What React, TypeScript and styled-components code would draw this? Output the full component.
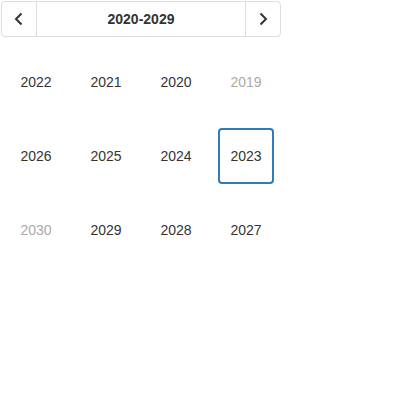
import React from 'react';
import styled, { createGlobalStyle } from 'styled-components';

const GlobalStyle = createGlobalStyle`
  body {
    margin: 0;
    background: #fff;
    font-family: "Liberation Sans", Arial, sans-serif;
    color: #333;
  }
`;

const Root = styled.div`
  width: 280px;
  padding: 1px;
`;

const Header = styled.div`
  display: flex;
  align-items: stretch;
  height: 34px;
  border: 1px solid #ddd;
  border-radius: 4px;
`;

const NavButton = styled.button<{ $side: 'left' | 'right' }>`
  width: 35px;
  padding: 0;
  border: none;
  background: transparent;
  display: flex;
  align-items: center;
  justify-content: center;
  ${(p) => (p.$side === 'left' ? 'border-right: 1px solid #ddd;' : 'border-left: 1px solid #ddd;')}
`;

const Title = styled.div`
  flex: 1;
  display: flex;
  align-items: center;
  justify-content: center;
  font-size: 14px;
  font-weight: bold;
  color: #333;
`;

const Grid = styled.div`
  display: grid;
  grid-template-columns: repeat(4, 70px);
  grid-auto-rows: 74px;
  margin-top: 8px;
`;

const Cell = styled.div`
  display: flex;
  align-items: center;
  justify-content: center;
`;

const Year = styled.div<{ $muted?: boolean; $selected?: boolean }>`
  width: 56px;
  height: 56px;
  box-sizing: border-box;
  display: flex;
  align-items: center;
  justify-content: center;
  font-size: 14px;
  color: ${(p) => (p.$muted ? '#aaa' : '#333')};
  border: 2px solid ${(p) => (p.$selected ? '#337ab7' : 'transparent')};
  border-radius: 4px;
`;

const Chevron = ({ dir }: { dir: 'left' | 'right' }) => (
  <svg width="12" height="14" viewBox="0 0 12 14">
    <path
      d={dir === 'left' ? 'M8.5 1.5 L3 7 L8.5 12.5' : 'M3.5 1.5 L9 7 L3.5 12.5'}
      fill="none"
      stroke="#333"
      strokeWidth="2"
    />
  </svg>
);

const years = [
  { y: 2022 }, { y: 2021 }, { y: 2020 }, { y: 2019, muted: true },
  { y: 2026 }, { y: 2025 }, { y: 2024 }, { y: 2023, selected: true },
  { y: 2030, muted: true }, { y: 2029 }, { y: 2028 }, { y: 2027 },
];

export default function App() {
  return (
    <Root>
      <GlobalStyle />
      <Header>
        <NavButton $side="left"><Chevron dir="left" /></NavButton>
        <Title>2020-2029</Title>
        <NavButton $side="right"><Chevron dir="right" /></NavButton>
      </Header>
      <Grid>
        {years.map((item) => (
          <Cell key={item.y}>
            <Year $muted={item.muted} $selected={item.selected}>{item.y}</Year>
          </Cell>
        ))}
      </Grid>
    </Root>
  );
}
